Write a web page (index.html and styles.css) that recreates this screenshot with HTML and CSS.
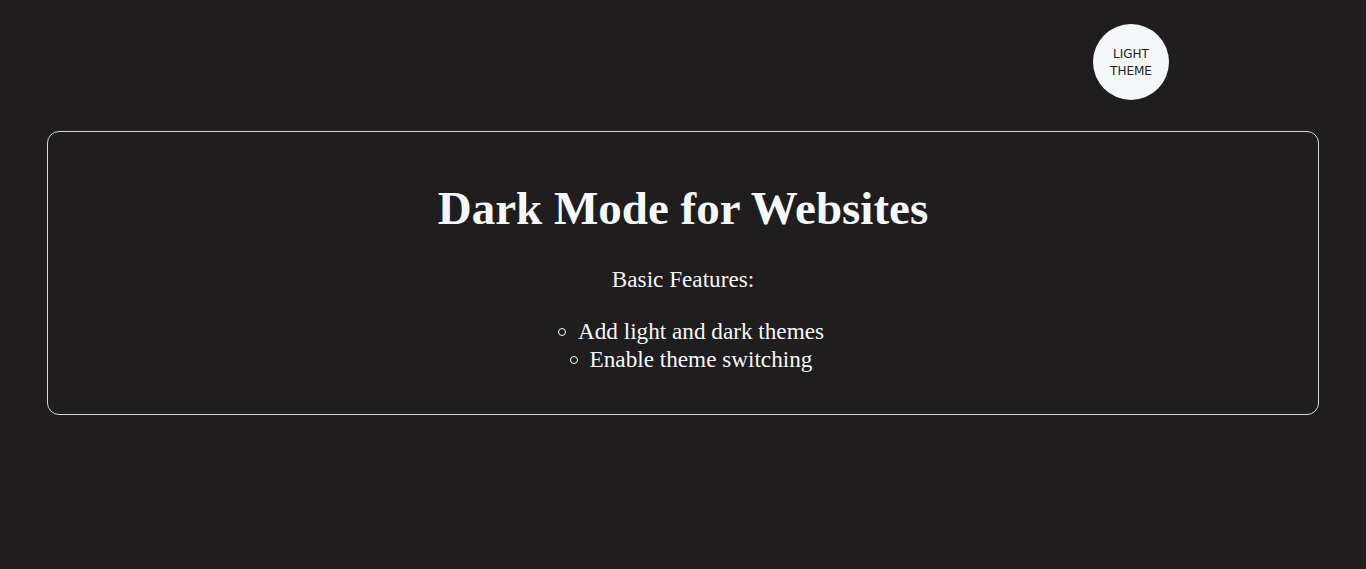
FILE: index.html
```html
<!DOCTYPE html>
<html>
<head>
<meta charset="utf-8">
<link rel="stylesheet" href="styles.css">
</head>
<body>
<header class="top">
  <button class="theme-btn">LIGHT<br>THEME</button>
</header>
<main class="card">
  <h1 class="title">Dark Mode for Websites</h1>
  <p class="lead">Basic Features:</p>
  <ul class="features">
    <li>Add light and dark themes</li>
    <li>Enable theme switching</li>
  </ul>
</main>
</body>
</html>
```
FILE: styles.css
```css
html, body {
  margin: 0;
  padding: 0;
  background: #1f1d1e;
  color: #f5f8fa;
  font-family: "Liberation Serif", "Times New Roman", serif;
}
body {
  padding: 24px 47px 0;
}
.top {
  display: flex;
  justify-content: flex-end;
  padding-right: 150px;
}
.theme-btn {
  width: 76px;
  height: 76px;
  border-radius: 50%;
  border: none;
  background: #f5f8fa;
  color: #1f1d1e;
  font-family: "DejaVu Sans", Tahoma, sans-serif;
  font-size: 12px;
  line-height: 17px;
  padding: 2px 0 0;
}
.card {
  margin-top: 31px;
  border: 1px solid #d8d8d8;
  border-radius: 12px;
  text-align: center;
  padding: 30px 0 41px;
}
.title {
  font-size: 47px;
  font-weight: bold;
  margin: 19px 0 31px;
}
.lead {
  font-size: 23.2px;
  margin: 0 0 24px;
}
.features {
  list-style: none;
  margin: 0;
  padding: 0 0 0 16px;
  font-size: 23.2px;
  line-height: 28px;
}
.features li::before {
  content: "";
  display: inline-block;
  width: 6px;
  height: 6px;
  border: 1px solid #f5f8fa;
  border-radius: 50%;
  margin-right: 12px;
  vertical-align: 3px;
}
```
